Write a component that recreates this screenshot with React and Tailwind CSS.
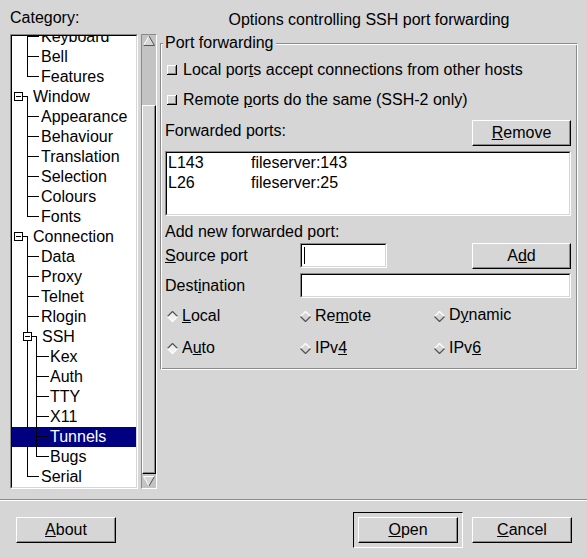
import React from "react";

const tree = [
  { label: "Keyboard", kind: "l1" },
  { label: "Bell", kind: "l1" },
  { label: "Features", kind: "l1last" },
  { label: "Window", kind: "root" },
  { label: "Appearance", kind: "l1" },
  { label: "Behaviour", kind: "l1" },
  { label: "Translation", kind: "l1" },
  { label: "Selection", kind: "l1" },
  { label: "Colours", kind: "l1" },
  { label: "Fonts", kind: "l1last" },
  { label: "Connection", kind: "root" },
  { label: "Data", kind: "l1" },
  { label: "Proxy", kind: "l1" },
  { label: "Telnet", kind: "l1" },
  { label: "Rlogin", kind: "l1" },
  { label: "SSH", kind: "ssh" },
  { label: "Kex", kind: "l2" },
  { label: "Auth", kind: "l2" },
  { label: "TTY", kind: "l2" },
  { label: "X11", kind: "l2" },
  { label: "Tunnels", kind: "l2", selected: true },
  { label: "Bugs", kind: "l2last" },
  { label: "Serial", kind: "l1last" },
];

const widths = { root: 21, l1: 29, l1last: 29, ssh: 30, l2: 38, l2last: 38 };

function TreeLines({ kind }) {
  return (
    <svg width={widths[kind]} height="20" className="shrink-0" shapeRendering="crispEdges">
      <g stroke="#000" strokeWidth="1" fill="none">
        {kind === "root" && (
          <>
            <rect x="2.5" y="5.5" width="8" height="8" fill="#fff" />
            <line x1="4" y1="9.5" x2="9" y2="9.5" />
            <line x1="11" y1="9.5" x2="16" y2="9.5" />
            <line x1="15.5" y1="9.5" x2="15.5" y2="20" />
          </>
        )}
        {(kind === "l1" || kind === "l1last") && (
          <>
            <line x1="15.5" y1="0" x2="15.5" y2={kind === "l1" ? 20 : 10} />
            <line x1="15" y1="9.5" x2="27" y2="9.5" />
          </>
        )}
        {kind === "ssh" && (
          <>
            <line x1="15.5" y1="0" x2="15.5" y2="20" />
            <rect x="11.5" y="5.5" width="8" height="8" fill="#fff" />
            <line x1="13" y1="9.5" x2="18" y2="9.5" />
            <line x1="20" y1="9.5" x2="25" y2="9.5" />
            <line x1="24.5" y1="9.5" x2="24.5" y2="20" />
          </>
        )}
        {(kind === "l2" || kind === "l2last") && (
          <>
            <line x1="15.5" y1="0" x2="15.5" y2="20" />
            <line x1="24.5" y1="0" x2="24.5" y2={kind === "l2" ? 20 : 10} />
            <line x1="24" y1="9.5" x2="37" y2="9.5" />
          </>
        )}
      </g>
    </svg>
  );
}

function Sunken({ className, children }) {
  return (
    <div className={`border border-t-[#8a8a8a] border-l-[#8a8a8a] border-b-white border-r-white ${className}`}>
      <div className="w-full h-full border border-t-black border-l-black border-b-[#d6d6d6] border-r-[#d6d6d6] bg-white overflow-hidden">
        {children}
      </div>
    </div>
  );
}

function Btn({ className, children }) {
  return (
    <div className={`h-[26px] flex items-center justify-center border border-t-white border-l-white border-b-black border-r-black shadow-[inset_-1px_-1px_0_#8a8a8a] ${className}`}>
      {children}
    </div>
  );
}

function Check() {
  return (
    <svg width="10" height="10" className="shrink-0" shapeRendering="crispEdges">
      <rect x="0" y="0" width="10" height="10" fill="#d6d6d6" />
      <path d="M0.5 9 V0.5 H9" stroke="#fff" fill="none" />
      <path d="M0 9.5 H9.5 V0" stroke="#000" fill="none" />
      <path d="M1 8.5 H8.5 V1" stroke="#8a8a8a" fill="none" />
    </svg>
  );
}

function Radio({ on }) {
  const top = on ? "#555" : "#fff";
  const bottom = on ? "#fff" : "#555";
  return (
    <svg width="11" height="11" className="shrink-0">
      <polygon points="5.5,0.5 10.5,5.5 5.5,10.5 0.5,5.5" fill={on ? "#f0f0f0" : "#d6d6d6"} />
      <path d="M0.5 5.5 L5.5 0.5 L10.5 5.5" stroke={top} strokeWidth="1.3" fill="none" />
      <path d="M0.5 5.5 L5.5 10.5 L10.5 5.5" stroke={bottom} strokeWidth="1.3" fill="none" />
    </svg>
  );
}

function Arrow({ down }) {
  return (
    <svg width="14" height="12" className="shrink-0">
      {down ? (
        <>
          <polygon points="1.5,1.5 12.5,1.5 7,11" fill="#d6d6d6" />
          <path d="M7 11 L1.5 1.5 H12.5" stroke="#fff" fill="none" />
          <path d="M12.5 1.5 L7 11" stroke="#555" fill="none" />
        </>
      ) : (
        <>
          <polygon points="7,1 12.5,10.5 1.5,10.5" fill="#d6d6d6" />
          <path d="M1.5 10.5 L7 1" stroke="#fff" fill="none" />
          <path d="M7 1 L12.5 10.5 H1.5" stroke="#555" fill="none" />
        </>
      )}
    </svg>
  );
}

function RadioCell({ on, children, shift }) {
  return (
    <div className="flex items-center h-[20px]">
      <Radio on={on} />
      <span className={`ml-[4px] ${shift ? "pb-[3px]" : ""}`}>{children}</span>
    </div>
  );
}

export default function App() {
  return (
    <div className="w-[587px] h-[558px] bg-[#d6d6d6] text-black text-[16px] leading-[20px] font-['Liberation_Sans',Arial,Helvetica,sans-serif] flex flex-col overflow-hidden">
      <div className="h-[499px] flex pl-[10px]">
        {/* Category tree */}
        <div className="w-[147px] flex flex-col">
          <div className="mt-[8px] h-[20px]">
            Cate<span className="underline">g</span>ory:
          </div>
          <div className="mt-[6px] flex gap-[3px]">
            <Sunken className="w-[128px] h-[455px]">
              <div className="-mt-[9px] flex flex-col">
                {tree.map((item) => (
                  <div
                    key={item.label}
                    className={`h-[20px] flex items-center whitespace-nowrap ${item.selected ? "bg-[#000080] text-white" : ""}`}
                  >
                    <TreeLines kind={item.kind} />
                    <span>{item.label}</span>
                  </div>
                ))}
              </div>
            </Sunken>
            <div className="w-[16px] h-[455px] flex flex-col items-center bg-[#c3c3c3] border border-t-[#8a8a8a] border-l-[#8a8a8a] border-b-white border-r-white">
              <Arrow />
              <div className="h-[58px]" />
              <div className="w-[14px] h-[369px] bg-[#d6d6d6] border border-t-white border-l-white border-b-black border-r-black shadow-[inset_-1px_-1px_0_#8a8a8a]" />
              <div className="h-[1px]" />
              <Arrow down />
            </div>
          </div>
        </div>

        {/* Options panel */}
        <div className="ml-[3px] w-[418px] flex flex-col">
          <div className="mt-[10px] h-[20px] text-center">Options controlling SSH port forwarding</div>
          <div className="mt-[13px] flex flex-col pl-[4px] pr-[6px] pb-[11px] border border-t-[#8a8a8a] border-l-[#8a8a8a] border-b-white border-r-white shadow-[inset_1px_1px_0_#fff,inset_-1px_-1px_0_#8a8a8a]">
            <div className="-mt-[11px] -ml-[2px] w-fit px-[2px] h-[20px] bg-[#d6d6d6]">Port forwarding</div>

            <div className="mt-[7px] h-[20px] flex items-center pl-[2px]">
              <Check />
              <span className="ml-[6px]">
                Local por<span className="underline">t</span>s accept connections from other hosts
              </span>
            </div>
            <div className="mt-[10px] h-[20px] flex items-center pl-[2px]">
              <Check />
              <span className="ml-[6px]">
                Remote <span className="underline">p</span>orts do the same (SSH-2 only)
              </span>
            </div>

            <div className="mt-[10px] flex justify-between items-start">
              <span className="mt-[1px] h-[20px]">Forwarded ports:</span>
              <Btn className="w-[99px]">
                <span className="underline">R</span>emove
              </Btn>
            </div>

            <Sunken className="mt-[5px] h-[65px]">
              <div className="flex flex-col pl-[1px]">
                {[
                  ["L143", "fileserver:143"],
                  ["L26", "fileserver:25"],
                ].map(([a, b]) => (
                  <div key={a} className="h-[20px] grid grid-cols-[83px_1fr] items-center">
                    <span>{a}</span>
                    <span>{b}</span>
                  </div>
                ))}
              </div>
            </Sunken>

            <div className="mt-[6px] h-[20px]">Add new forwarded port:</div>

            <div className="mt-[1px] h-[25px] flex items-center">
              <span className="w-[135px]">
                <span className="underline">S</span>ource port
              </span>
              <Sunken className="w-[87px] h-[25px]">
                <div className="ml-[2px] mt-[2px] w-[1px] h-[17px] bg-black" />
              </Sunken>
              <div className="flex-1" />
              <Btn className="w-[99px]">
                A<span className="underline">d</span>d
              </Btn>
            </div>

            <div className="mt-[5px] h-[25px] flex items-center">
              <span className="w-[135px]">
                Dest<span className="underline">i</span>nation
              </span>
              <Sunken className="flex-1 h-[25px]" />
            </div>

            <div className="mt-[8px] grid grid-cols-[133px_134px_1fr] pl-[2px]">
              <RadioCell on>
                <span className="underline">L</span>ocal
              </RadioCell>
              <RadioCell>
                Re<span className="underline">m</span>ote
              </RadioCell>
              <RadioCell shift>
                D<span className="underline">y</span>namic
              </RadioCell>
            </div>
            <div className="mt-[12px] grid grid-cols-[133px_134px_1fr] pl-[2px]">
              <RadioCell on>
                A<span className="underline">u</span>to
              </RadioCell>
              <RadioCell>
                IPv<span className="underline">4</span>
              </RadioCell>
              <RadioCell>
                IPv<span className="underline">6</span>
              </RadioCell>
            </div>
          </div>
        </div>
      </div>

      {/* separator */}
      <div className="h-[1px] bg-[#8a8a8a]" />
      <div className="h-[1px] bg-white" />

      {/* bottom buttons */}
      <div className="h-[57px] flex items-center pl-[16px] pr-[15px]">
        <Btn className="w-[100px]">
          <span className="underline">A</span>bout
        </Btn>
        <div className="flex-1" />
        <div className="w-[110px] h-[36px] p-[4px] border border-t-black border-l-black border-b-white border-r-white">
          <Btn className="w-full">
            <span className="underline">O</span>pen
          </Btn>
        </div>
        <Btn className="ml-[9px] w-[100px]">
          <span className="underline">C</span>ancel
        </Btn>
      </div>
    </div>
  );
}
